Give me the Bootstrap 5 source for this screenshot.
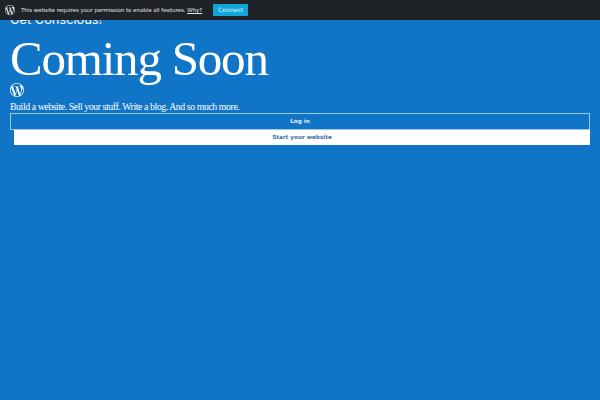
<!DOCTYPE html>
<html lang="en">
<head>
<meta charset="utf-8">
<title>Coming Soon</title>
<link href="https://cdn.jsdelivr.net/npm/bootstrap@5.3.0/dist/css/bootstrap.min.css" rel="stylesheet">
<style>
html,body{height:100%}
body{background:#1175c7;color:#fff;font-family:"Liberation Serif",serif;overflow:hidden}
.perm-bar{position:fixed;top:0;left:0;right:0;height:20px;background:#1f2327;z-index:5;padding-left:5px;font-family:"DejaVu Sans",sans-serif;font-size:5.45px;color:#e6e8ea}
.perm-bar svg{width:10px;height:10px;fill:#e8e9ea}
.perm-text{margin-left:6px}
.perm-text a{color:#e6e8ea}
.perm-btn{margin-left:11px;background:#0ea5d8;color:#e4f4fb;font-size:6px;line-height:12px;width:35px;text-align:center;border-radius:1px;height:12px}
.page-wrap{padding:12px 10px 0 10px}
.tagline{font-family:Inter,sans-serif;font-size:12.8px;line-height:15px;margin:0}
.big-title{font-family:"Liberation Serif",serif;font-size:49px;line-height:54px;margin:5px 0 0;font-weight:400;letter-spacing:-1.2px}
.wp-mark{width:14px;height:14px;fill:#fff;display:block;margin:-3px 0 0}
.sub-line{font-size:9.8px;line-height:12px;margin:4px 0 0;letter-spacing:-.42px}
.act{font-family:"DejaVu Sans",sans-serif;font-size:5.7px;font-weight:700;height:17px;line-height:15px;padding:0;border-radius:0;display:block;text-align:center;text-decoration:none}
.act-login{margin-top:0;border:1px solid #9cc9ea;color:#e8f2fa}
.act-start{height:15px;line-height:15px;margin-left:4px;background:#fff;color:#3a6f9e}
</style>
</head>
<body>
<div class="perm-bar d-flex align-items-center">
  <svg viewBox="0 0 24 24"><path d="M21.469 6.825c.84 1.537 1.318 3.3 1.318 5.175 0 3.979-2.156 7.456-5.363 9.325l3.295-9.527c.615-1.54.82-2.771.82-3.864 0-.405-.026-.78-.07-1.11m-7.981.105c.647-.03 1.232-.105 1.232-.105.582-.075.514-.93-.067-.899 0 0-1.755.135-2.88.135-1.064 0-2.85-.15-2.85-.15-.585-.03-.661.855-.075.885 0 0 .54.061 1.125.09l1.68 4.605-2.37 7.08L5.354 6.9c.649-.03 1.234-.1 1.234-.1.585-.075.516-.93-.065-.896 0 0-1.746.138-2.874.138-.2 0-.438-.008-.69-.015C4.911 3.15 8.235 1.215 12 1.215c2.809 0 5.365 1.072 7.286 2.833-.046-.003-.091-.009-.141-.009-1.06 0-1.812.923-1.812 1.914 0 .89.513 1.643 1.06 2.531.411.72.89 1.643.89 2.977 0 .915-.354 1.994-.821 3.479l-1.075 3.585-3.9-11.61.001.014zM12 22.784c-1.059 0-2.081-.153-3.048-.437l3.237-9.406 3.315 9.087c.024.053.05.101.078.149-1.12.393-2.325.609-3.582.609M1.211 12c0-1.564.336-3.05.935-4.39L7.29 21.709C3.694 19.96 1.212 16.271 1.211 12M12 0C5.385 0 0 5.385 0 12s5.385 12 12 12 12-5.385 12-12S18.615 0 12 0"/></svg>
  <span class="perm-text">This website requires your permission to enable all features. <a href="#">Why?</a></span>
  <span class="perm-btn">Connect</span>
</div>
<main class="page-wrap">
  <p class="tagline">Get Conscious!</p>
  <h1 class="big-title">Coming Soon</h1>
  <svg class="wp-mark" viewBox="0 0 24 24"><path d="M21.469 6.825c.84 1.537 1.318 3.3 1.318 5.175 0 3.979-2.156 7.456-5.363 9.325l3.295-9.527c.615-1.54.82-2.771.82-3.864 0-.405-.026-.78-.07-1.11m-7.981.105c.647-.03 1.232-.105 1.232-.105.582-.075.514-.93-.067-.899 0 0-1.755.135-2.88.135-1.064 0-2.85-.15-2.85-.15-.585-.03-.661.855-.075.885 0 0 .54.061 1.125.09l1.68 4.605-2.37 7.08L5.354 6.9c.649-.03 1.234-.1 1.234-.1.585-.075.516-.93-.065-.896 0 0-1.746.138-2.874.138-.2 0-.438-.008-.69-.015C4.911 3.15 8.235 1.215 12 1.215c2.809 0 5.365 1.072 7.286 2.833-.046-.003-.091-.009-.141-.009-1.06 0-1.812.923-1.812 1.914 0 .89.513 1.643 1.06 2.531.411.72.89 1.643.89 2.977 0 .915-.354 1.994-.821 3.479l-1.075 3.585-3.9-11.61.001.014zM12 22.784c-1.059 0-2.081-.153-3.048-.437l3.237-9.406 3.315 9.087c.024.053.05.101.078.149-1.12.393-2.325.609-3.582.609M1.211 12c0-1.564.336-3.05.935-4.39L7.29 21.709C3.694 19.96 1.212 16.271 1.211 12M12 0C5.385 0 0 5.385 0 12s5.385 12 12 12 12-5.385 12-12S18.615 0 12 0"/></svg>
  <p class="sub-line">Build a website. Sell your stuff. Write a blog. And so much more.</p>
  <a class="act act-login" href="#">Log in</a>
  <a class="act act-start" href="#">Start your website</a>
</main>
<script src="https://cdn.jsdelivr.net/npm/bootstrap@5.3.0/dist/js/bootstrap.bundle.min.js"></script>
</body>
</html>
